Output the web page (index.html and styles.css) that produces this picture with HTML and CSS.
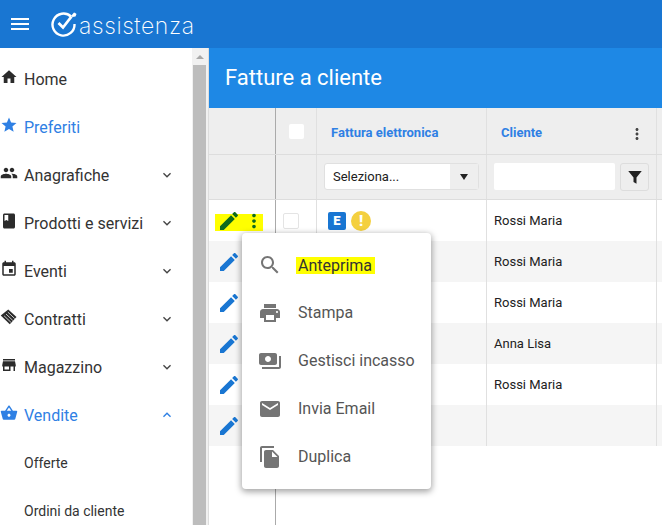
FILE: index.html
```html
<!DOCTYPE html>
<html lang="it">
<head>
    <meta charset="UTF-8">
    <title>Fatture a cliente</title>
    <link rel="stylesheet" href="styles.css">
</head>
<body>
    <svg class="icon-defs" aria-hidden="true">
        <symbol id="i-home" viewBox="0 0 24 24"><path d="M10 20v-6h4v6h5v-8h3L12 3 2 12h3v8z"/></symbol>
        <symbol id="i-star" viewBox="0 0 24 24"><path d="M12 17.27L18.18 21l-1.64-7.03L22 9.24l-7.19-.61L12 2 9.19 8.63 2 9.24l5.46 4.73L5.82 21z"/></symbol>
        <symbol id="i-people" viewBox="0 0 24 24"><path d="M16 11c1.66 0 2.99-1.34 2.99-3S17.66 5 16 5c-1.66 0-3 1.34-3 3s1.34 3 3 3zm-8 0c1.66 0 2.99-1.34 2.99-3S9.66 5 8 5C6.34 5 5 6.34 5 8s1.34 3 3 3zm0 2c-2.33 0-7 1.17-7 3.5V19h14v-2.5c0-2.33-4.67-3.5-7-3.5zm8 0c-.29 0-.62.02-.97.05 1.16.84 1.97 1.97 1.97 3.45V19h6v-2.5c0-2.33-4.67-3.5-7-3.5z"/></symbol>
        <symbol id="i-book" viewBox="0 0 24 24"><path d="M18 2H6c-1.1 0-2 .9-2 2v16c0 1.1.9 2 2 2h12c1.1 0 2-.9 2-2V4c0-1.1-.9-2-2-2zM6 4h5v8l-2.5-1.5L6 12V4z"/></symbol>
        <symbol id="i-event" viewBox="0 0 24 24"><path d="M17 12h-5v5h5v-5zM16 1v2H8V1H6v2H5c-1.11 0-1.99.9-1.99 2L3 19c0 1.1.89 2 2 2h14c1.1 0 2-.9 2-2V5c0-1.1-.9-2-2-2h-1V1h-2zm3 18H5V8h14v11z"/></symbol>
        <symbol id="i-contract" viewBox="0 0 24 24"><path d="M11 2l11 10-9 9.500L1 10z"/><path d="M8 8l9 8.500M10.500 5.500l9 8.500M5.500 10.500l9 8.500" fill="none" stroke="#fff" stroke-width="1"/></symbol>
        <symbol id="i-store" viewBox="0 0 24 24"><path d="M20 4H4v2h16V4zm1 10v-2l-1-5H4l-1 5v2h1v6h10v-6h4v6h2v-6h1zm-9 4H6v-4h6v4z"/></symbol>
        <symbol id="i-basket" viewBox="0 0 24 24"><path d="M17.21 9l-4.38-6.56c-.19-.28-.51-.42-.83-.42-.32 0-.64.14-.83.43L6.79 9H2c-.55 0-1 .45-1 1 0 .09.01.18.04.27l2.54 9.27c.23.84 1 1.46 1.92 1.46h13c.92 0 1.69-.62 1.93-1.46l2.54-9.27L23 10c0-.55-.45-1-1-1h-4.790zM9 9l3-4.400L15 9H9zm3 8c-1.100 0-2-.9-2-2s.9-2 2-2 2 .9 2 2-.9 2-2 2z"/></symbol>
        <symbol id="i-down" viewBox="0 0 24 24"><path d="M16.590 8.590L12 13.170 7.410 8.590 6 10l6 6 6-6z"/></symbol>
        <symbol id="i-up" viewBox="0 0 24 24"><path d="M12 8l-6 6 1.410 1.410L12 10.830l4.590 4.580L18 14z"/></symbol>
        <symbol id="i-edit" viewBox="0 0 24 24"><path d="M3 17.250V21h3.750L17.810 9.940l-3.750-3.750L3 17.250zM20.710 7.040c.39-.39.39-1.020 0-1.410l-2.340-2.340c-.39-.39-1.020-.39-1.410 0l-1.830 1.830 3.750 3.750 1.830-1.830z"/></symbol>
        <symbol id="i-more" viewBox="0 0 24 24"><path d="M12 8c1.100 0 2-.9 2-2s-.9-2-2-2-2 .9-2 2 .9 2 2 2zm0 2c-1.100 0-2 .9-2 2s.9 2 2 2 2-.9 2-2-.9-2-2-2zm0 6c-1.100 0-2 .9-2 2s.9 2 2 2 2-.9 2-2-.9-2-2-2z"/></symbol>
        <symbol id="i-search" viewBox="0 0 24 24"><path d="M15.500 14h-.79l-.28-.27C15.410 12.590 16 11.110 16 9.500 16 5.910 13.090 3 9.500 3S3 5.910 3 9.500 5.910 16 9.500 16c1.610 0 3.090-.59 4.230-1.570l.27.28v.79l5 4.990L20.490 19l-4.990-5zm-6 0C7.010 14 5 11.990 5 9.500S7.010 5 9.500 5 14 7.010 14 9.500 11.990 14 9.500 14z"/></symbol>
        <symbol id="i-print" viewBox="0 0 24 24"><path d="M19 8H5c-1.660 0-3 1.340-3 3v6h4v4h12v-4h4v-6c0-1.660-1.340-3-3-3zm-3 11H8v-5h8v5zm3-7c-.55 0-1-.45-1-1s.45-1 1-1 1 .45 1 1-.45 1-1 1zm-1-9H6v4h12V3z"/></symbol>
        <symbol id="i-cash" viewBox="0 0 24 24"><path d="M19 14V6c0-1.100-.9-2-2-2H3c-1.100 0-2 .9-2 2v8c0 1.100.9 2 2 2h14c1.100 0 2-.9 2-2zm-9-1c-1.660 0-3-1.340-3-3s1.340-3 3-3 3 1.340 3 3-1.340 3-3 3zm13-6v11c0 1.100-.9 2-2 2H4v-2h17V7h2z"/></symbol>
        <symbol id="i-mail" viewBox="0 0 24 24"><path d="M20 4H4c-1.100 0-1.990.9-1.990 2L2 18c0 1.100.9 2 2 2h16c1.100 0 2-.9 2-2V6c0-1.100-.9-2-2-2zm0 4l-8 5-8-5V6l8 5 8-5v2z"/></symbol>
        <symbol id="i-copy" viewBox="0 0 24 24"><path d="M16 1H4c-1.100 0-2 .9-2 2v14h2V3h12V1zm-1 4l6 6v10c0 1.100-.9 2-2 2H7.990C6.890 23 6 22.100 6 21l.01-14c0-1.100.89-2 1.990-2h7zm-1 7h5.500L14 6.500V12z"/></symbol>
    </svg>

    <header class="topbar">
        <svg class="burger" viewBox="0 0 24 24"><path d="M3 18h18v-2H3v2zm0-5h18v-2H3v2zm0-7v2h18V6H3z"/></svg>
        <svg class="logo-mark" viewBox="0 0 26 26">
            <path d="M20 5.500A11 11 0 1 0 23.500 13" fill="none" stroke="#fff" stroke-width="2.400"/>
            <path d="M7.500 12l4.500 4.500 8.500-11" fill="none" stroke="#fff" stroke-width="2.800"/>
            <path d="M20 5l3-3.500 1.500 1L23 1l2.500 2-1 2.500-3 .5z" fill="#fff"/>
        </svg>
        <span class="logo-text">assistenza</span>
    </header>

    <div class="layout">
        <nav class="sidebar">
            <a class="nav-item"><svg class="nav-icon"><use href="#i-home"/></svg><span class="nav-label">Home</span></a>
            <a class="nav-item is-active"><svg class="nav-icon"><use href="#i-star"/></svg><span class="nav-label">Preferiti</span></a>
            <a class="nav-item"><svg class="nav-icon"><use href="#i-people"/></svg><span class="nav-label">Anagrafiche</span><svg class="nav-caret"><use href="#i-down"/></svg></a>
            <a class="nav-item"><svg class="nav-icon"><use href="#i-book"/></svg><span class="nav-label">Prodotti e servizi</span><svg class="nav-caret"><use href="#i-down"/></svg></a>
            <a class="nav-item"><svg class="nav-icon"><use href="#i-event"/></svg><span class="nav-label">Eventi</span><svg class="nav-caret"><use href="#i-down"/></svg></a>
            <a class="nav-item"><svg class="nav-icon"><use href="#i-contract"/></svg><span class="nav-label">Contratti</span><svg class="nav-caret"><use href="#i-down"/></svg></a>
            <a class="nav-item"><svg class="nav-icon"><use href="#i-store"/></svg><span class="nav-label">Magazzino</span><svg class="nav-caret"><use href="#i-down"/></svg></a>
            <a class="nav-item is-active"><svg class="nav-icon"><use href="#i-basket"/></svg><span class="nav-label">Vendite</span><svg class="nav-caret"><use href="#i-up"/></svg></a>
            <a class="nav-item nav-sub">Offerte</a>
            <a class="nav-item nav-sub">Ordini da cliente</a>
        </nav>

        <div class="scrollbar">
            <span class="scroll-arrow"></span>
            <span class="scroll-thumb"></span>
        </div>

        <main class="content">
            <h1 class="page-title">Fatture a cliente</h1>

            <div class="table-row table-head">
                <div class="cell"></div>
                <div class="cell cell-center"><span class="check check-head"></span></div>
                <div class="cell col-title">Fattura elettronica</div>
                <div class="cell col-title col-client">Cliente<svg class="col-menu"><use href="#i-more"/></svg></div>
                <div class="cell cell-last"></div>
            </div>

            <div class="table-row table-filter">
                <div class="cell"></div>
                <div class="cell"></div>
                <div class="cell">
                    <div class="select-box"><span class="select-value">Seleziona...</span><span class="select-arrow"></span></div>
                </div>
                <div class="cell filter-cell">
                    <span class="filter-input"></span>
                    <span class="filter-btn"><svg viewBox="0 0 24 24"><path d="M3 4h18l-7 8.500V21l-4-2.500v-6z"/></svg></span>
                </div>
                <div class="cell cell-last"></div>
            </div>

            <div class="table-row table-data">
                <div class="cell cell-actions">
                    <span class="marker"></span>
                    <svg class="edit-icon is-marked"><use href="#i-edit"/></svg>
                    <svg class="more-icon"><use href="#i-more"/></svg>
                </div>
                <div class="cell"><span class="check"></span></div>
                <div class="cell cell-status"><span class="badge-e">E</span><span class="badge-warn">!</span></div>
                <div class="cell">Rossi Maria</div>
                <div class="cell cell-last"></div>
            </div>
            <div class="table-row table-data">
                <div class="cell cell-actions"><svg class="edit-icon"><use href="#i-edit"/></svg></div>
                <div class="cell"></div><div class="cell"></div>
                <div class="cell">Rossi Maria</div>
                <div class="cell cell-last"></div>
            </div>
            <div class="table-row table-data">
                <div class="cell cell-actions"><svg class="edit-icon"><use href="#i-edit"/></svg></div>
                <div class="cell"></div><div class="cell"></div>
                <div class="cell">Rossi Maria</div>
                <div class="cell cell-last"></div>
            </div>
            <div class="table-row table-data">
                <div class="cell cell-actions"><svg class="edit-icon"><use href="#i-edit"/></svg></div>
                <div class="cell"></div><div class="cell"></div>
                <div class="cell">Anna Lisa</div>
                <div class="cell cell-last"></div>
            </div>
            <div class="table-row table-data">
                <div class="cell cell-actions"><svg class="edit-icon"><use href="#i-edit"/></svg></div>
                <div class="cell"></div><div class="cell"></div>
                <div class="cell">Rossi Maria</div>
                <div class="cell cell-last"></div>
            </div>
            <div class="table-row table-data">
                <div class="cell cell-actions"><svg class="edit-icon"><use href="#i-edit"/></svg></div>
                <div class="cell"></div><div class="cell"></div>
                <div class="cell"></div>
                <div class="cell cell-last"></div>
            </div>
            <div class="table-rest"></div>

            <ul class="popup-menu">
                <li class="popup-item"><svg class="popup-icon"><use href="#i-search"/></svg><span class="popup-label is-marked">Anteprima</span></li>
                <li class="popup-item"><svg class="popup-icon"><use href="#i-print"/></svg><span class="popup-label">Stampa</span></li>
                <li class="popup-item"><svg class="popup-icon"><use href="#i-cash"/></svg><span class="popup-label">Gestisci incasso</span></li>
                <li class="popup-item"><svg class="popup-icon"><use href="#i-mail"/></svg><span class="popup-label">Invia Email</span></li>
                <li class="popup-item"><svg class="popup-icon"><use href="#i-copy"/></svg><span class="popup-label">Duplica</span></li>
            </ul>
        </main>
    </div>
</body>
</html>
```

FILE: styles.css
```css
* {
    box-sizing: border-box;
    margin: 0;
    padding: 0;
}

html, body {
    height: 100%;
    overflow: hidden;
}

body {
    display: flex;
    flex-direction: column;
    font-family: Roboto, "Liberation Sans", sans-serif;
    color: #212121;
    background: #fff;
}

.icon-defs {
    display: none;
}

/* top bar */
.topbar {
    height: 48px;
    flex: none;
    display: flex;
    align-items: center;
    padding-left: 8px;
    background: #1976d2;
    color: #fff;
}

.burger {
    width: 24px;
    height: 24px;
    fill: #fff;
}

.logo-mark {
    width: 26px;
    height: 26px;
    margin: -1px 0 0 19px;
}

.logo-text {
    margin: 3px 0 0 2px;
    font-family: Inter, sans-serif;
    font-size: 23px;
    font-weight: 200;
    letter-spacing: 0.6px;
}

.layout {
    flex: 1;
    min-height: 0;
    display: flex;
}

/* sidebar */
.sidebar {
    width: 192px;
    flex: none;
    padding-top: 7px;
    overflow: hidden;
}

.nav-item {
    height: 48px;
    display: flex;
    align-items: center;
    font-size: 16px;
    color: #333;
}

.nav-item.is-active {
    color: #2f80e4;
}

.nav-icon {
    width: 18px;
    height: 18px;
    margin: -4px 6px 0 0;
    fill: #2b2b2b;
    flex: none;
}

.is-active .nav-icon,
.is-active .nav-caret {
    fill: #2f80e4;
}

.nav-label {
    flex: 1;
}

.nav-caret {
    width: 16px;
    height: 16px;
    margin-right: 17px;
    fill: #444;
}

.nav-sub {
    padding-left: 24px;
    font-size: 14px;
    color: #333;
}

/* fake scrollbar */
.scrollbar {
    width: 17px;
    flex: none;
    padding: 0 2px 0 1px;
    display: flex;
    flex-direction: column;
    align-items: center;
    background: #f1f1f1;
    border-right: 1px solid #ddd;
}

.scroll-arrow {
    margin-top: 7px;
    border: 4px solid transparent;
    border-top: 0;
    border-bottom: 4px solid #a8a8a8;
}

.scroll-thumb {
    width: 13px;
    flex: 1;
    margin-top: 6px;
    background: #bdbdbd;
}

/* table */
.content {
    position: relative;
    flex: 1;
    min-width: 0;
    display: flex;
    flex-direction: column;
}

.page-title {
    height: 60px;
    flex: none;
    padding-left: 16px;
    font-size: 22px;
    font-weight: 400;
    line-height: 60px;
    color: #fff;
    background: #1e88e5;
}

.table-row {
    flex: none;
    display: grid;
    grid-template-columns: 67px 41px 170px 170px 1fr;
    font-size: 13px;
}

.table-head {
    height: 47px;
    background: #eee;
    border-bottom: 1px solid #ddd;
}

.table-filter {
    height: 45px;
    background: #eee;
    border-bottom: 1px solid #ddd;
}

.table-data {
    height: 41px;
}

.table-data:nth-of-type(even) {
    background: #f5f5f5;
}

.cell {
    display: flex;
    align-items: center;
    padding-left: 7px;
    border-right: 1px solid #e0e0e0;
}

.cell:first-child {
    padding-left: 0;
    border-right-color: #aaa;
}

.cell-last {
    border-right: 0;
}

.cell-center {
    justify-content: center;
    padding: 0;
}

.col-title {
    padding: 3px 0 0 14px;
    font-size: 13px;
    font-weight: 700;
    color: #2f80e4;
}

.col-client {
    justify-content: space-between;
}

.col-menu {
    width: 18px;
    height: 18px;
    margin: 2px 10px 0 0;
    fill: #444;
}

.check {
    width: 16px;
    height: 16px;
    background: #fff;
    border: 1px solid #e4e4e4;
    border-radius: 2px;
}

.check-head {
    width: 15px;
    height: 15px;
    border: 0;
    margin-top: 1px;
}

.select-box {
    width: 155px;
    height: 27px;
    display: flex;
    margin-top: -1px;
    background: #fff;
    border: 1px solid #e0e0e0;
    border-radius: 3px;
}

.select-value {
    flex: 1;
    padding-left: 8px;
    line-height: 25px;
}

.select-arrow {
    width: 28px;
    position: relative;
    background: #eee;
}

.select-arrow::after {
    content: "";
    position: absolute;
    left: 10px;
    top: 10px;
    border: 4px solid transparent;
    border-bottom: 0;
    border-top: 6px solid #222;
}

.filter-cell {
    gap: 5px;
}

.filter-input {
    width: 121px;
    height: 27px;
    margin-top: -1px;
    background: #fff;
    border-radius: 2px;
}

.filter-btn {
    width: 29px;
    height: 28px;
    display: flex;
    align-items: center;
    justify-content: center;
    margin-top: -1px;
    border: 1px solid #ddd;
    border-radius: 3px;
}

.filter-btn svg {
    width: 18px;
    height: 18px;
    fill: #222;
}

.cell.cell-actions {
    position: relative;
    padding-left: 8px;
}

.edit-icon {
    width: 24px;
    height: 24px;
    fill: #1976d2;
    flex: none;
}

.edit-icon.is-marked {
    position: relative;
    fill: #0f6b1e;
}

.more-icon {
    position: relative;
    width: 22px;
    height: 22px;
    margin-left: 2px;
    fill: #0f6b1e;
    flex: none;
}

.marker {
    position: absolute;
    left: 6px;
    top: 14px;
    width: 48px;
    height: 17px;
    background: #ff0;
}

.cell-status {
    gap: 5px;
    padding-left: 11px;
}

.badge-e {
    width: 18px;
    height: 18px;
    background: #1976d2;
    border-radius: 2px;
    color: #fff;
    font-size: 13px;
    font-weight: 900;
    line-height: 18px;
    text-align: center;
}

.badge-warn {
    width: 20px;
    height: 20px;
    background: #f4d03f;
    border-radius: 50%;
    color: #fff;
    font-size: 15px;
    font-weight: 900;
    line-height: 20px;
    text-align: center;
}

.table-rest {
    flex: 1;
    width: 67px;
    border-right: 1px solid #aaa;
}

/* popup menu */
.popup-menu {
    position: absolute;
    left: 33px;
    top: 185px;
    width: 189px;
    padding: 8px 0;
    list-style: none;
    background: #fff;
    border-radius: 4px;
    box-shadow: 0 2px 6px 1px rgba(0, 0, 0, 0.35);
}

.popup-item {
    height: 48px;
    display: flex;
    align-items: center;
    padding-left: 16px;
    font-size: 16px;
    color: #555;
}

.popup-icon {
    width: 24px;
    height: 24px;
    margin-right: 16px;
    fill: #757575;
    flex: none;
}

.popup-label {
    margin-top: -2px;
}

.popup-label.is-marked {
    margin: 0 0 0 -2px;
    padding: 0 3px 0 2px;
    background: #ff0;
    color: #333;
    line-height: 17px;
}
```
